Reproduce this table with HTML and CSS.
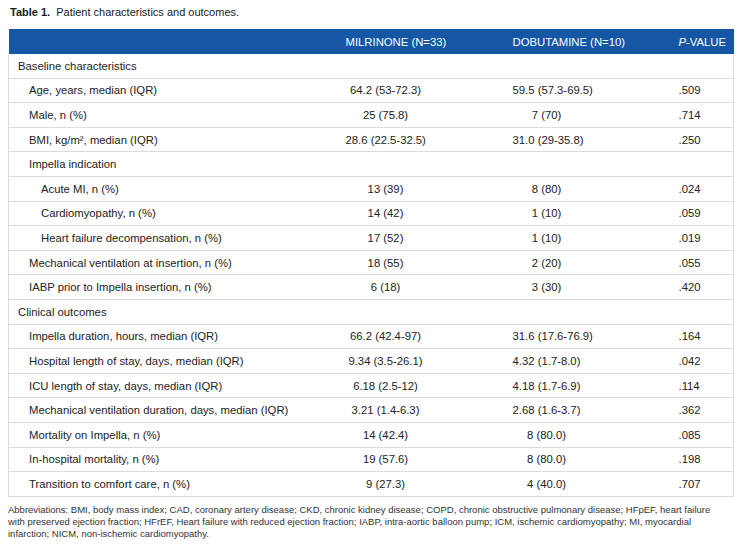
FILE: index.html
```html
<!DOCTYPE html>
<html lang="en">
<head>
<meta charset="utf-8">
<title>Table 1. Patient characteristics and outcomes.</title>
<link rel="stylesheet" href="styles.css">
</head>
<body>
<div class="page">
  <p class="caption"><b>Table 1.</b>&nbsp; Patient characteristics and outcomes.</p>
  <table class="tbl">
    <colgroup>
      <col class="col-label">
      <col class="col-mil">
      <col class="col-dob">
      <col class="col-p">
    </colgroup>
    <thead>
      <tr>
        <th class="h-label"></th>
        <th class="h-val">MILRINONE (N=33)</th>
        <th class="h-val">DOBUTAMINE (N=10)</th>
        <th class="h-val"><i>P</i>-VALUE</th>
      </tr>
    </thead>
    <tbody>
      <tr><td class="lbl l0">Baseline characteristics</td><td class="mil"></td><td class="dob"></td><td class="pv"></td></tr>
      <tr><td class="lbl l1">Age, years, median (IQR)</td><td class="mil">64.2 (53-72.3)</td><td class="dob">59.5 (57.3-69.5)</td><td class="pv">.509</td></tr>
      <tr><td class="lbl l1">Male, n (%)</td><td class="mil">25 (75.8)</td><td class="dob">7 (70)</td><td class="pv">.714</td></tr>
      <tr><td class="lbl l1">BMI, kg/m², median (IQR)</td><td class="mil">28.6 (22.5-32.5)</td><td class="dob">31.0 (29-35.8)</td><td class="pv">.250</td></tr>
      <tr><td class="lbl l1">Impella indication</td><td class="mil"></td><td class="dob"></td><td class="pv"></td></tr>
      <tr><td class="lbl l2">Acute MI, n (%)</td><td class="mil">13 (39)</td><td class="dob">8 (80)</td><td class="pv">.024</td></tr>
      <tr><td class="lbl l2">Cardiomyopathy, n (%)</td><td class="mil">14 (42)</td><td class="dob">1 (10)</td><td class="pv">.059</td></tr>
      <tr><td class="lbl l2">Heart failure decompensation, n (%)</td><td class="mil">17 (52)</td><td class="dob">1 (10)</td><td class="pv">.019</td></tr>
      <tr><td class="lbl l1">Mechanical ventilation at insertion, n (%)</td><td class="mil">18 (55)</td><td class="dob">2 (20)</td><td class="pv">.055</td></tr>
      <tr><td class="lbl l1">IABP prior to Impella insertion, n (%)</td><td class="mil">6 (18)</td><td class="dob">3 (30)</td><td class="pv">.420</td></tr>
      <tr><td class="lbl l0">Clinical outcomes</td><td class="mil"></td><td class="dob"></td><td class="pv"></td></tr>
      <tr><td class="lbl l1">Impella duration, hours, median (IQR)</td><td class="mil">66.2 (42.4-97)</td><td class="dob">31.6 (17.6-76.9)</td><td class="pv">.164</td></tr>
      <tr><td class="lbl l1">Hospital length of stay, days, median (IQR)</td><td class="mil">9.34 (3.5-26.1)</td><td class="dob">4.32 (1.7-8.0)</td><td class="pv">.042</td></tr>
      <tr><td class="lbl l1">ICU length of stay, days, median (IQR)</td><td class="mil">6.18 (2.5-12)</td><td class="dob">4.18 (1.7-6.9)</td><td class="pv">.114</td></tr>
      <tr><td class="lbl l1">Mechanical ventilation duration, days, median (IQR)</td><td class="mil">3.21 (1.4-6.3)</td><td class="dob">2.68 (1.6-3.7)</td><td class="pv">.362</td></tr>
      <tr><td class="lbl l1">Mortality on Impella, n (%)</td><td class="mil">14 (42.4)</td><td class="dob">8 (80.0)</td><td class="pv">.085</td></tr>
      <tr><td class="lbl l1">In-hospital mortality, n (%)</td><td class="mil">19 (57.6)</td><td class="dob">8 (80.0)</td><td class="pv">.198</td></tr>
      <tr><td class="lbl l1">Transition to comfort care, n (%)</td><td class="mil">9 (27.3)</td><td class="dob">4 (40.0)</td><td class="pv">.707</td></tr>
    </tbody>
  </table>
  <p class="notes">Abbreviations: BMI, body mass index; CAD, coronary artery disease; CKD, chronic kidney disease; COPD, chronic obstructive pulmonary disease; HFpEF, heart failure with preserved ejection fraction; HFrEF, Heart failure with reduced ejection fraction; IABP, intra-aortic balloon pump; ICM, ischemic cardiomyopathy; MI, myocardial infarction; NICM, non-ischemic cardiomyopathy.</p>
</div>
</body>
</html>
```

FILE: styles.css
```css
html, body {
  margin: 0;
  padding: 0;
  background: #ffffff;
}

body {
  font-family: "Liberation Sans", Arial, Helvetica, sans-serif;
  color: #222222;
}

.page {
  padding: 5px 8px 0 8px;
}

.caption {
  margin: 0 0 10px 2px;
  font-size: 11px;
  line-height: 14px;
  color: #1a1a1a;
}

.caption b {
  font-weight: bold;
}

.tbl {
  width: 725px;
  border-collapse: collapse;
  table-layout: fixed;
  font-size: 11.3px;
}

.col-label { width: 337px; }
.col-mil { width: 167px; }
.col-dob { width: 166px; }
.col-p { width: 55px; }

.tbl thead tr {
  background: #1557a4;
}

.tbl th {
  height: 25px;
  padding: 0;
  color: #ffffff;
  font-weight: normal;
  text-align: left;
  vertical-align: middle;
  white-space: nowrap;
}

.tbl tbody tr {
  border-bottom: 1px solid #dcdcdc;
}

.tbl tbody {
  border-left: 1px solid #dcdcdc;
  border-right: 1px solid #dcdcdc;
}

.tbl td {
  height: 23.6px;
  padding: 0;
  vertical-align: middle;
  white-space: nowrap;
}

.tbl td.l0 { padding-left: 9px; }
.tbl td.l1 { padding-left: 20px; }
.tbl td.l2 { padding-left: 32px; }

.tbl td.mil {
  text-align: center;
  padding-right: 87px;
}

.tbl td.dob {
  text-align: center;
  padding-right: 98px;
}

.tbl td.pv {
  text-align: left;
}

.notes {
  width: 712px;
  margin: 7px 0 0 0;
  font-size: 9.5px;
  line-height: 12px;
  color: #333333;
}
```
